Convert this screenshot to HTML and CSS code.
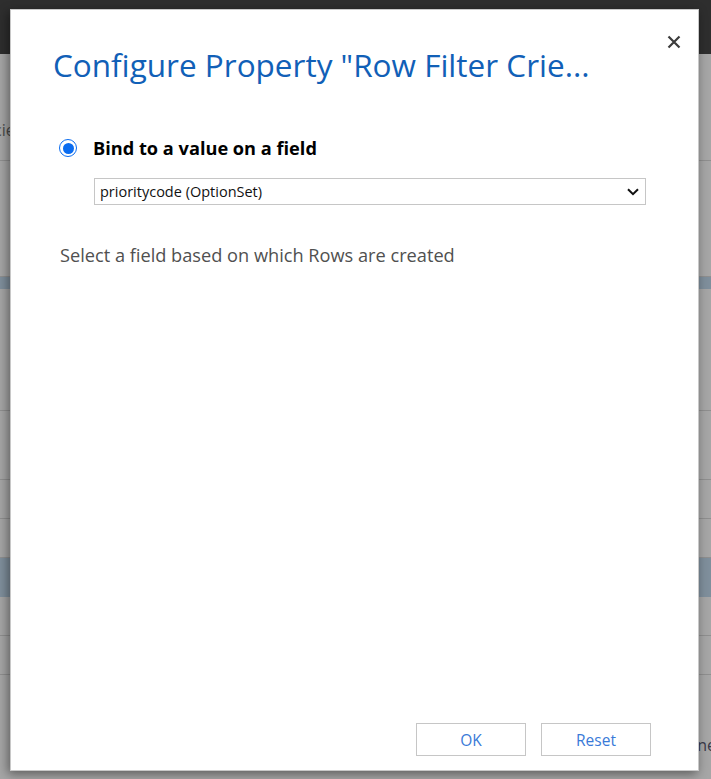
FILE: index.html
```html
<!DOCTYPE html>
<html lang="en">
<head>
<meta charset="utf-8">
<title>Configure Property</title>
<link rel="stylesheet" href="styles.css">
</head>
<body>
<div class="app">
  <header class="topbar"></header>
  <main class="backdrop-page">
    <div class="bg-row bg-row-tall"><span class="bg-text">cie</span></div>
    <div class="bg-row bg-row-mid"></div>
    <div class="bg-row bg-band"></div>
    <div class="bg-row bg-row-xl"></div>
    <div class="bg-row bg-row-m"></div>
    <div class="bg-row bg-row-s"></div>
    <div class="bg-row bg-row-s"></div>
    <div class="bg-row bg-band2"></div>
    <div class="bg-row bg-row-s"></div>
    <div class="bg-row bg-row-s"></div>
    <div class="bg-row bg-row-last"><span class="bg-text-right">ne</span></div>
  </main>
</div>

<div class="overlay">
  <section class="dialog" role="dialog" aria-labelledby="dlg-title">
    <button class="close" aria-label="Close">
      <svg width="14" height="14" viewBox="0 0 14 14"><path d="M1.5 1.5 L12.5 12.5 M12.5 1.5 L1.5 12.5" stroke="#3c3c3c" stroke-width="2.2" fill="none"/></svg>
    </button>
    <h1 id="dlg-title" class="title">Configure Property "Row Filter Crie...</h1>

    <div class="body">
      <label class="radio-row">
        <span class="radio"><span class="radio-dot"></span></span>
        <span class="radio-label">Bind to a value on a field</span>
      </label>
      <div class="select">
        <span class="select-value">prioritycode (OptionSet)</span>
        <svg class="chev" width="12" height="8" viewBox="0 0 12 8"><path d="M1 1.2 L6 6.2 L11 1.2" stroke="#111" stroke-width="2" fill="none"/></svg>
      </div>
      <p class="hint">Select a field based on which Rows are created</p>
    </div>

    <footer class="actions">
      <button class="btn">OK</button>
      <button class="btn">Reset</button>
    </footer>
  </section>
</div>
</body>
</html>
```

FILE: styles.css
```css
* { box-sizing: border-box; }
html, body { margin: 0; padding: 0; }
body {
  width: 711px;
  height: 779px;
  overflow: hidden;
  background: #a6a6a6;
  font-family: "Open Sans", "Noto Sans", sans-serif;
  position: relative;
}
.app { display: flex; flex-direction: column; height: 100%; }
.topbar { height: 54px; background: #2e2e2e; flex: none; }
.backdrop-page { display: flex; flex-direction: column; flex: 1; }
.bg-row { border-bottom: 1px solid #8f8f8f; position: relative; flex: none; }
.bg-row-tall { height: 107px; }
.bg-text { position: absolute; left: -6px; top: 66px; font-size: 16px; line-height: 20px; color: #4a4a4a; }
.bg-row-mid { height: 116px; }
.bg-band { height: 12px; background: #7f8f9c; border-bottom: none; }
.bg-row-xl { height: 122px; }
.bg-row-m { height: 69px; }
.bg-row-s { height: 39px; }
.bg-band2 { height: 39px; background: #7f8f9c; border-bottom: none; }
.bg-row-last { flex: 1; border-bottom: none; }
.bg-text-right { position: absolute; right: -5px; top: 60px; font-size: 16px; line-height: 20px; color: #3a3a4a; }

.overlay { position: absolute; inset: 0; }
.dialog {
  position: absolute;
  left: 10px; top: 9px;
  width: 689px; height: 762px;
  background: #fff;
  border: 1px solid #c8c8c8;
  box-shadow: -2px 3px 10px rgba(0,0,0,0.45);
  display: flex;
  flex-direction: column;
}
.close {
  position: absolute;
  right: 13px; top: 21px;
  width: 22px; height: 22px;
  border: none; background: none; padding: 0;
  display: flex; align-items: center; justify-content: center;
}
.title {
  margin: 33px 0 0 42px;
  font-family: "Open Sans", sans-serif;
  font-weight: 400;
  font-size: 31.5px;
  letter-spacing: 0;
  line-height: 44px;
  color: #1160b7;
  white-space: nowrap;
}
.body { padding: 49px 52px 0 48px; flex: 1; }
.radio-row { display: flex; align-items: center; gap: 16px; }
.radio {
  width: 18px; height: 18px; border-radius: 50%;
  border: 1.5px solid #0a6cf0;
  display: flex; align-items: center; justify-content: center;
}
.radio-dot { width: 11px; height: 11px; border-radius: 50%; background: #0a6cf0; }
.radio-label { font-size: 18.2px; font-weight: 700; color: #000; letter-spacing: 0; }
.select {
  margin: 18px 0 0 35px;
  height: 27px;
  border: 1px solid #c6c6c6;
  display: flex; align-items: center; justify-content: space-between;
  padding: 0 6px 0 5px;
}
.select-value { font-size: 14.5px; color: #111; letter-spacing: 0; }
.hint { margin: 38px 0 0 1px; font-size: 18.2px; color: #505050; letter-spacing: 0; }
.actions {
  display: flex; justify-content: flex-end; gap: 15px;
  padding: 0 47px 14px 0;
}
.btn {
  width: 110px; height: 33px;
  background: #fff;
  border: 1px solid #c6c6c6;
  color: #3a7ad8;
  font-family: "Open Sans", sans-serif;
  font-size: 15.5px;
  padding: 0;
}
```
